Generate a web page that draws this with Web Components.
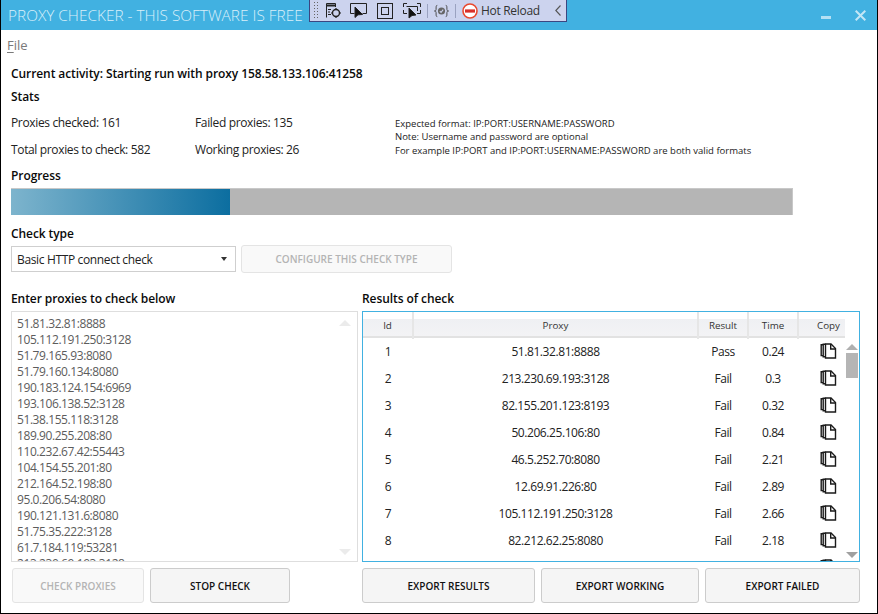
<!DOCTYPE html>
<html>
<head>
<meta charset="utf-8">
<title>Proxy checker</title>
<style>
  html, body { margin: 0; padding: 0; background: #fff; }
  body { font: 12px "Open Sans", "Noto Sans", sans-serif; color: #111; letter-spacing: -0.35px; }
</style>
</head>
<body>
<px-window>
  <px-titlebar slot="title">PROXY CHECKER - THIS SOFTWARE IS FREE</px-titlebar>
  <px-menu>File</px-menu>
  <px-heading style="margin-top:5px">Current activity: Starting run with proxy 158.58.133.106:41258</px-heading>
  <px-heading style="margin-top:5px">Stats</px-heading>
  <px-stats></px-stats>
  <px-heading style="margin-top:8px">Progress</px-heading>
  <px-progress value="219" total="782"></px-progress>
  <px-heading style="margin-top:10px">Check type</px-heading>
  <px-checktype></px-checktype>
  <px-panels>
    <px-heading slot="left-label">Enter proxies to check below</px-heading>
    <px-heading slot="right-label">Results of check</px-heading>
    <px-proxylist slot="left">51.81.32.81:8888
105.112.191.250:3128
51.79.165.93:8080
51.79.160.134:8080
190.183.124.154:6969
193.106.138.52:3128
51.38.155.118:3128
189.90.255.208:80
110.232.67.42:55443
104.154.55.201:80
212.164.52.198:80
95.0.206.54:8080
190.121.131.6:8080
51.75.35.222:3128
61.7.184.119:53281
213.230.69.193:3128</px-proxylist>
    <px-results slot="right"></px-results>
    <div slot="left-buttons" style="display:flex;gap:6px;padding-left:1px">
      <px-button disabled style="width:132px">CHECK PROXIES</px-button>
      <px-button style="width:140px">STOP CHECK</px-button>
    </div>
    <div slot="right-buttons" style="display:flex;gap:6px">
      <px-button style="width:173px">EXPORT RESULTS</px-button>
      <px-button style="width:158px">EXPORT WORKING</px-button>
      <px-button style="width:155px">EXPORT FAILED</px-button>
    </div>
  </px-panels>
</px-window>

<script>
class PxWindow extends HTMLElement {
  constructor() {
    super();
    this.attachShadow({ mode: "open" }).innerHTML = `
      <style>
        :host {
          display: flex;
          flex-direction: column;
          width: 878px;
          height: 614px;
          box-sizing: border-box;
          border: 1px solid #000;
          border-top: 0;
          overflow: hidden;
          background: #fff;
        }
        .body { padding: 0 17px 0 10px; }
      </style>
      <slot name="title"></slot>
      <div class="body"><slot></slot></div>`;
  }
}

class PxTitlebar extends HTMLElement {
  constructor() {
    super();
    this.attachShadow({ mode: "open" }).innerHTML = `
      <style>
        :host {
          display: flex;
          height: 30px;
          background: #41b1e1;
          color: #d9eff9;
          flex: none;
          letter-spacing: 0;
        }
        .title {
          font: 300 15.4px/31px "Open Sans", sans-serif;
          padding-left: 7px;
          width: 301px;
          white-space: nowrap;
          flex: none;
        }
        .tools {
          flex: none;
          box-sizing: border-box;
          width: 258px;
          height: 22px;
          background: #ccd3ee;
          border: 1px solid #3b4681;
          border-top: 0;
          display: flex;
          align-items: center;
          color: #333;
          font: 12px/20px "Open Sans", sans-serif;
          letter-spacing: -0.3px;
        }
        .tools svg { flex: none; display: block; }
        .grip {
          width: 6px; height: 19px; margin: 0 5px 0 3px;
          background-image: radial-gradient(#666 0.7px, transparent 0.9px);
          background-size: 3px 3px;
        }
        .sep { width: 1px; height: 14px; background: #9aa2c0; flex: none; }
        .hot { margin: 0 15px 0 3px; white-space: nowrap; width: 59px; }
        .spacer { flex: 1; }
        .win { width: 36px; display: flex; align-items: center; justify-content: center; }
      </style>
      <div class="title"><slot></slot></div>
      <div class="tools">
        <div class="grip"></div>
        <svg width="18" height="17" viewBox="0 0 18 17" fill="none" stroke="#222" style="margin-right:8px">
          <path d="M2.5 15.5V1.5H11.5V5" />
          <path d="M2.5 3.5H11.5" stroke-width="2"/>
          <path d="M4 7.5H7M4 10H6M4 12.5H7"/>
          <circle cx="12" cy="11" r="3.5" stroke-width="1.4"/>
          <path d="M12 6V8M12 14V16M7 11H9M15 11H17" stroke-width="1.2"/>
        </svg>
        <svg width="17" height="17" viewBox="0 0 17 17" fill="none" stroke="#222" style="margin-right:10px">
          <path d="M4.5 11.5H0.5V1.5H16.5V11.5H12.5"/>
          <path d="M5 5L5 15.5L8 12.8L12.5 12.5Z" fill="#111"/>
        </svg>
        <svg width="16" height="17" viewBox="0 0 16 17" fill="none" stroke="#222" style="margin-right:10px">
          <rect x="0.5" y="1.5" width="15" height="15"/>
          <rect x="4.5" y="5.5" width="7" height="7"/>
        </svg>
        <svg width="18" height="17" viewBox="0 0 18 17" fill="none" stroke="#222" style="margin-right:6px">
          <path d="M0.5 5V1.5H4M14 1.5H17.5V5M0.5 8V11.5H4M14 11.5H17.5V8"/>
          <path d="M3.5 4.5H14.5V9"/>
          <path d="M6 6L6 16L9 13.5L13 13Z" fill="#111"/>
        </svg>
        <div class="sep"></div>
        <svg width="15" height="14" viewBox="0 0 16 14" fill="none" stroke="#444" style="margin:0 6px">
          <path d="M3.5 1C1.8 1 2.4 3 2.2 5.5C2.1 6.6 1.4 7 .5 7C1.4 7 2.1 7.4 2.2 8.5C2.4 11 1.8 13 3.5 13"/>
          <path d="M12.5 1C14.2 1 13.6 3 13.8 5.5C13.9 6.6 14.6 7 15.5 7C14.6 7 13.9 7.4 13.8 8.5C13.6 11 14.2 13 12.5 13"/>
          <circle cx="8" cy="7" r="3.8" fill="#666" stroke="none"/>
          <path d="M6.2 7.2L7.5 8.5L9.8 5.6" stroke="#ccd3ee" stroke-width="1.1"/>
        </svg>
        <div class="sep"></div>
        <svg width="16" height="16" viewBox="0 0 16 16" style="margin-left:6px">
          <circle cx="8" cy="8" r="7" fill="#fff" stroke="#e8492f" stroke-width="1.6"/>
          <rect x="3" y="6.4" width="10" height="3.2" fill="#d8302a"/>
        </svg>
        <span class="hot">Hot Reload</span>
        <svg width="6" height="11" viewBox="0 0 6 11" fill="none" stroke="#555" stroke-width="1.1"><path d="M5.5 .5L.8 5.5L5.5 10.5"/></svg>
      </div>
      <div class="spacer"></div>
      <div class="win">
        <svg width="10" height="4" viewBox="0 0 10 4" style="margin-top:6px"><rect y="0" width="10" height="3" fill="#b4e0f4"/></svg>
      </div>
      <div class="win" style="width:33px">
        <svg width="11" height="11" viewBox="0 0 11 11" fill="none" stroke="#c2e6f6" stroke-width="2"><path d="M.7 .7L10.3 10.3M10.3 .7L.7 10.3"/></svg>
      </div>`;
  }
}

class PxMenu extends HTMLElement {
  constructor() {
    super();
    this.attachShadow({ mode: "open" }).innerHTML = `
      <style>
        :host { display: block; height: 30px; margin-left: -4px; color: #7a7a7a; font-size: 13px; line-height: 30px; letter-spacing: 0; }
        u { text-underline-offset: 2px; }
      </style>
      <u>F</u>ile`;
  }
}

class PxHeading extends HTMLElement {
  constructor() {
    super();
    this.attachShadow({ mode: "open" }).innerHTML = `
      <style>
        :host { display: block; height: 18px; font-size: 12px; font-weight: 600; line-height: 18px; color: #0a0a0a; white-space: nowrap; letter-spacing: -0.08px; }
      </style>
      <slot></slot>`;
  }
}

class PxStats extends HTMLElement {
  constructor() {
    super();
    this.attachShadow({ mode: "open" }).innerHTML = `
      <style>
        :host { display: grid; grid-template-columns: 184px 200px 1fr; margin-top: 8px; color: #222; white-space: nowrap; line-height: 18px; }
        .row2 { margin-top: 9px; }
        .notes { grid-column: 3; grid-row: 1 / span 2; font-size: 9.5px; line-height: 12.5px; padding-top: 4px; letter-spacing: 0; }
        .notes div:nth-child(3) { margin-top: 1.5px; }
      </style>
      <div>Proxies checked: 161</div>
      <div>Failed proxies: 135</div>
      <div class="notes">
        <div>Expected format: IP:PORT:USERNAME:PASSWORD</div>
        <div>Note: Username and password are optional</div>
        <div>For example IP:PORT and IP:PORT:USERNAME:PASSWORD are both valid formats</div>
      </div>
      <div class="row2">Total proxies to check: 582</div>
      <div class="row2">Working proxies: 26</div>`;
  }
}

class PxProgress extends HTMLElement {
  constructor() {
    super();
    const w = this.getAttribute("value");
    this.attachShadow({ mode: "open" }).innerHTML = `
      <style>
        :host { display: block; width: ${this.getAttribute("total")}px; height: 27px; margin-top: 3px; background: #b5b5b5; box-sizing: border-box; border-top: 1px solid #c8c8c8; border-right: 1px solid #c8c8c8; }
        .fill { width: ${w}px; height: 100%; background: linear-gradient(90deg, #7db4cd, #0c6ea0); }
      </style>
      <div class="fill"></div>`;
  }
}

class PxChecktype extends HTMLElement {
  constructor() {
    super();
    this.attachShadow({ mode: "open" }).innerHTML = `
      <style>
        :host { display: flex; align-items: center; gap: 5px; height: 28px; margin-top: 2px; }
        .select {
          box-sizing: border-box; width: 225px; height: 26px;
          border: 1px solid #cfcfcf; display: flex; align-items: center; justify-content: space-between;
          padding: 0 8px 0 5px; color: #222;
        }
        .arrow { width: 0; height: 0; border: 3.5px solid transparent; border-top: 4px solid #333; border-bottom: 0; }
        px-button { width: 211px; --btn-h: 28px; }
      </style>
      <div class="select"><span>Basic HTTP connect check</span><span class="arrow"></span></div>
      <px-button disabled>CONFIGURE THIS CHECK TYPE</px-button>`;
  }
}

class PxButton extends HTMLElement {
  constructor() {
    super();
    this.attachShadow({ mode: "open" }).innerHTML = `
      <style>
        :host {
          display: flex; align-items: center; justify-content: center; box-sizing: border-box;
          height: var(--btn-h, 35px);
          background: #f5f5f5; border: 1px solid #cccccc; border-radius: 3px;
          font-size: 10px; font-weight: 600; color: #111; white-space: nowrap; letter-spacing: 0;
        }
        :host([disabled]) { background: #f9f9f9; border-color: #e4e4e4; color: #b4b4b4; }
      </style>
      <slot></slot>`;
  }
}

class PxPanels extends HTMLElement {
  constructor() {
    super();
    this.attachShadow({ mode: "open" }).innerHTML = `
      <style>
        :host {
          display: grid;
          grid-template-columns: 347px 498px;
          column-gap: 4px;
          grid-template-rows: 18px 251px 35px;
          row-gap: 3px;
          margin-top: 17px;
        }
        .btns { margin-top: 3px; }
      </style>
      <slot name="left-label"></slot>
      <slot name="right-label"></slot>
      <slot name="left"></slot>
      <slot name="right"></slot>
      <div class="btns"><slot name="left-buttons"></slot></div>
      <div class="btns"><slot name="right-buttons"></slot></div>`;
  }
}

class PxProxylist extends HTMLElement {
  constructor() {
    super();
    this.attachShadow({ mode: "open" }).innerHTML = `
      <style>
        :host {
          display: flex; box-sizing: border-box; height: 251px;
          border: 1px solid #dedede; overflow: hidden; color: #5c5c5c; letter-spacing: -0.42px;
        }
        .text { flex: 1; white-space: pre-line; padding: 4px 5px 0; line-height: 16px; overflow: hidden; }
        .bar { width: 24px; display: flex; flex-direction: column; justify-content: space-between; align-items: center; padding: 8px 0 6px; box-sizing: border-box; }
        .up, .down { width: 0; height: 0; border: 6px solid transparent; }
        .up { border-top: 0; border-bottom: 6px solid #ebebeb; }
        .down { border-bottom: 0; border-top: 6px solid #ebebeb; }
      </style>
      <div class="text"><slot></slot></div>
      <div class="bar"><div class="up"></div><div class="down"></div></div>`;
  }
}

const COPY_ICON = `<svg width="17" height="16" viewBox="0 0 17 16" fill="none" stroke="#1a1a1a" stroke-width="1.4">
  <path d="M5.5 1H11L15.5 5.5V15H5.5Z"/><path d="M10.7 1V6H15.5"/>
  <path d="M5.5 1.2H3.2V13.8H5.5M3.2 1.8H1.2V12.6H3.2"/>
</svg>`;

class PxResults extends HTMLElement {
  constructor() {
    super();
    const rows = [
      [1, "51.81.32.81:8888", "Pass", "0.24"],
      [2, "213.230.69.193:3128", "Fail", "0.3"],
      [3, "82.155.201.123:8193", "Fail", "0.32"],
      [4, "50.206.25.106:80", "Fail", "0.84"],
      [5, "46.5.252.70:8080", "Fail", "2.21"],
      [6, "12.69.91.226:80", "Fail", "2.89"],
      [7, "105.112.191.250:3128", "Fail", "2.66"],
      [8, "82.212.62.25:8080", "Fail", "2.18"],
    ];
    const html = rows.map(r => `<div class="row">
        <span>${r[0]}</span><span>${r[1]}</span><span>${r[2]}</span><span>${r[3]}</span><span class="ic">${COPY_ICON}</span>
      </div>`).join("");
    this.attachShadow({ mode: "open" }).innerHTML = `
      <style>
        :host {
          display: flex; box-sizing: border-box; height: 251px;
          border: 1px solid #41b1e1; overflow: hidden; color: #222; letter-spacing: -0.42px;
        }
        .table { width: 482px; flex: none; }
        .head, .row { display: grid; grid-template-columns: 50px 285px 50px 50px 47px; }
        .head {
          grid-template-columns: 51px 285px 50px 50px 46px;
          height: 26px; box-sizing: border-box; border-bottom: 2px solid #e2e2e2;
          background: linear-gradient(#ffffff 0, #ffffff 30%, #eff0f3 31%, #f3f3f5);
          font-size: 9.8px; line-height: 27px; color: #333; letter-spacing: 0;
        }
        .head span { text-align: center; border-right: 2px solid #e6e6e6; }
        .head span:last-child { border-right: 0; padding-left: 13px; box-sizing: border-box; }
        .row { height: 27px; align-items: center; text-align: center; line-height: 27px; margin-top: 0; }
        .ic { display: flex; justify-content: center; padding-left: 14px; margin-top: -2px; }
        .bar {
          flex: 1; display: flex; flex-direction: column; align-items: center;
          padding-top: 32px; box-sizing: border-box;
        }
        .up, .down { width: 0; height: 0; border: 6px solid transparent; }
        .up { border-top: 0; border-bottom: 6px solid #b0b0b0; }
        .down { border-bottom: 0; border-top: 6px solid #a0a0a0; margin-top: auto; margin-bottom: 3px; }
        .thumb { width: 12px; height: 25px; background: #b5b5b5; margin-top: 3px; }
      </style>
      <div class="table">
        <div class="head"><span>Id</span><span>Proxy</span><span>Result</span><span>Time</span><span>Copy</span></div>
        ${html}
        <div class="row"><span></span><span></span><span></span><span></span><span class="ic">${COPY_ICON}</span></div>
      </div>
      <div class="bar"><div class="up"></div><div class="thumb"></div><div class="down"></div></div>`;
  }
}

customElements.define("px-window", PxWindow);
customElements.define("px-titlebar", PxTitlebar);
customElements.define("px-menu", PxMenu);
customElements.define("px-heading", PxHeading);
customElements.define("px-stats", PxStats);
customElements.define("px-progress", PxProgress);
customElements.define("px-button", PxButton);
customElements.define("px-checktype", PxChecktype);
customElements.define("px-panels", PxPanels);
customElements.define("px-proxylist", PxProxylist);
customElements.define("px-results", PxResults);
</script>
</body>
</html>
